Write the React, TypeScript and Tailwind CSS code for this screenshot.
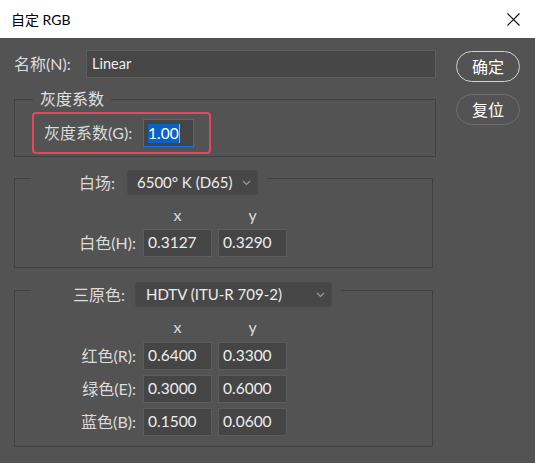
import React from 'react';

const label = 'text-[16px] leading-[20px] text-[#dcdcdc]';

function NumBox({ value }: { value: string }) {
  return (
    <div className="flex h-[28px] w-[69px] items-center border border-[#5c5c5c] bg-[#454545] pl-[4px] text-[15.5px] text-[#ededed]">
      {value}
    </div>
  );
}

function Chevron() {
  return (
    <svg width="9" height="6" viewBox="0 0 9 6" className="shrink-0">
      <path d="M1 1l3.5 3.5L8 1" fill="none" stroke="#9c9c9c" strokeWidth="1.1" />
    </svg>
  );
}

function AxisHeader() {
  return (
    <div className="ml-[128px] mt-[11px] flex gap-[6px] text-[16px] leading-[18px] text-[#dcdcdc]">
      <span className="w-[69px] text-center">x</span>
      <span className="w-[69px] text-center">y</span>
    </div>
  );
}

function CoordRow({ name, x, y }: { name: string; x: string; y: string }) {
  return (
    <div className="flex items-center">
      <span className={`w-[121px] text-right ${label}`}>{name}</span>
      <div className="ml-[7px] flex gap-[6px]">
        <NumBox value={x} />
        <NumBox value={y} />
      </div>
    </div>
  );
}

export default function App() {
  return (
    <div className="h-[463px] w-[535px] overflow-hidden bg-[#535353] font-[Lato,'Noto_Sans_CJK_SC',sans-serif]">
      {/* title bar */}
      <div className="flex h-[38px] items-center justify-between bg-white pl-[11px] pr-[15px]">
        <span className="text-[14px] text-black">自定 RGB</span>
        <svg width="13" height="13" viewBox="0 0 13 13">
          <path d="M0.5 0.5l12 12M12.5 0.5l-12 12" stroke="#111" strokeWidth="1.2" />
        </svg>
      </div>

      <div className="flex pl-[14px] pt-[12px]">
        {/* left column */}
        <div className="flex w-[422px] flex-col">
          <div className="flex h-[28px] items-center">
            <span className={`w-[72px] ${label}`}>名称(N):</span>
            <div className="flex h-[28px] w-[350px] items-center border border-[#5e5e5e] bg-[#474747] pl-[5px] text-[14.5px] text-[#ededed]">
              Linear
            </div>
          </div>

          <fieldset className="mt-[11px] w-[422px] border border-[#404040]">
            <legend className="ml-[18px] px-[7px] text-[16px] leading-[20px] text-[#e2e2e2]">灰度系数</legend>
            <div className="mb-[2px] ml-[17px] mt-[3px] flex h-[42px] w-[179px] items-center rounded-[4px] border-2 border-[#e5485c] pl-[10px] pr-[15px]">
              <span className={label}>灰度系数(G):</span>
              <div className="ml-auto flex h-[28px] w-[51px] items-center border border-[#1473e6] bg-[#454545] pl-[4px] text-[15.5px]">
                <span className="bg-[#0b62c6] leading-[19px] text-white">1.00</span>
                <span className="h-[19px] w-[1px] bg-[#f0a040]" />
              </div>
            </div>
          </fieldset>

          <fieldset className="mt-[4px] w-[419px] border border-[#404040]">
            <legend className="ml-[16px]">
              <div className="flex items-center pr-[9px] pt-[9px]">
                <span className={`w-[84px] text-right ${label}`}>白场:</span>
                <div className="ml-[12px] flex h-[25px] w-[131px] items-center justify-between rounded-[3px] border border-[#4a4a4a] bg-[#474747] pl-[9px] pr-[6px] text-[15px] text-[#ececec]">
                  <span>6500° K (D65)</span>
                  <Chevron />
                </div>
              </div>
            </legend>
            <AxisHeader />
            <div className="mt-[5px] pb-[10px]">
              <CoordRow name="白色(H):" x="0.3127" y="0.3290" />
            </div>
          </fieldset>

          <fieldset className="mt-[5px] w-[419px] border border-[#404040]">
            <legend className="ml-[16px]">
              <div className="flex items-center pr-[9px] pt-[9px]">
                <span className={`w-[94px] text-right ${label}`}>三原色:</span>
                <div className="ml-[10px] flex h-[25px] w-[197px] items-center justify-between rounded-[3px] border border-[#4a4a4a] bg-[#474747] pl-[10px] pr-[6px] text-[15px] text-[#ececec]">
                  <span>HDTV (ITU-R 709-2)</span>
                  <Chevron />
                </div>
              </div>
            </legend>
            <AxisHeader />
            <div className="mt-[6px] flex flex-col gap-[5px] pb-[10px]">
              <CoordRow name="红色(R):" x="0.6400" y="0.3300" />
              <CoordRow name="绿色(E):" x="0.3000" y="0.6000" />
              <CoordRow name="蓝色(B):" x="0.1500" y="0.0600" />
            </div>
          </fieldset>
        </div>

        {/* buttons */}
        <div className="ml-[20px] mt-[1px] flex flex-col gap-[12px]">
          <button className="flex h-[31px] w-[64px] items-center justify-center rounded-full border-[1.5px] border-[#d0d0d0] text-[16px] text-white">
            确定
          </button>
          <button className="flex h-[31px] w-[64px] items-center justify-center rounded-full border border-[#707070] text-[16px] text-white">
            复位
          </button>
        </div>
      </div>
    </div>
  );
}
